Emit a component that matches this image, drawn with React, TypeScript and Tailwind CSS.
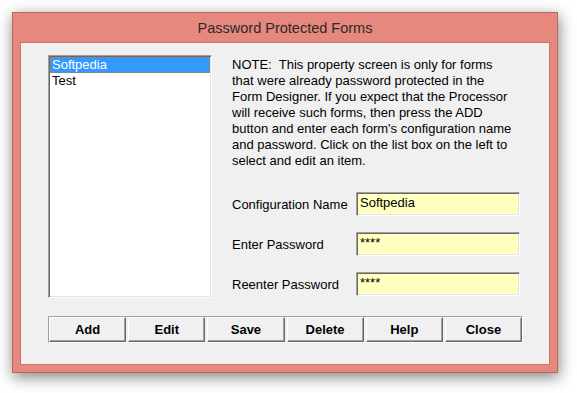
const NOTE_LINES = [
  "NOTE:  This property screen is only for forms",
  "that were already password protected in the",
  "Form Designer. If you expect that the Processor",
  "will receive such forms, then press the ADD",
  "button and enter each form's configuration name",
  "and password. Click on the list box on the left to",
  "select and edit an item.",
];

const FIELDS = [
  { label: "Configuration Name", value: "Softpedia" },
  { label: "Enter Password", value: "****" },
  { label: "Reenter Password", value: "****" },
];

const BUTTONS = ["Add", "Edit", "Save", "Delete", "Help", "Close"];

const sunken =
  "border border-t-[#a0a0a0] border-l-[#a0a0a0] border-r-white border-b-white shadow-[inset_1px_1px_0_#696969,inset_-1px_-1px_0_#e3e3e3]";

export default function App() {
  return (
    <div className="w-[577px] h-[393px] bg-white pt-[12px] pl-[12px] font-['Liberation_Sans',Arial,sans-serif] text-black">
      <div className="w-[546px] border border-[#b9685e] bg-[#e6887d] shadow-[1px_4px_14px_rgba(0,0,0,0.5)]">
        <div className="h-[29px] flex items-center justify-center text-[14.5px] text-[#2b2b2b] pt-[2px]">
          Password Protected Forms
        </div>

        <div className="mx-[7px] mb-[7px] h-[323px] border border-[#c9776d] bg-[#f0f0f0]">
          <div className="flex items-start pt-[12px] pl-[27px]">
            <div className={`w-[164px] h-[243px] bg-white p-[1px] ${sunken}`}>
              <div className="h-[16px] bg-[#3399ff] border border-dotted border-[#d0761e] text-white text-[13px] leading-[14px] pl-[1px]">
                Softpedia
              </div>
              <div className="h-[16px] text-[13px] leading-[16px] pl-[2px]">Test</div>
            </div>

            <div className="ml-[20px] w-[290px] pt-[2px]">
              <div className="text-[13px] leading-[16px] whitespace-pre">
                {NOTE_LINES.map((line) => (
                  <div key={line}>{line}</div>
                ))}
              </div>

              <div className="mt-[23px] flex flex-col gap-[16px]">
                {FIELDS.map((f) => (
                  <div key={f.label} className="flex items-center h-[24px]">
                    <span className="w-[124px] text-[13px] pt-[1px]">{f.label}</span>
                    <div
                      className={`w-[164px] h-[24px] bg-[#ffffc0] text-[13px] leading-[16px] pl-[3px] pt-[2px] ${sunken}`}
                    >
                      {f.value}
                    </div>
                  </div>
                ))}
              </div>
            </div>
          </div>

          <div className="mt-[18px] ml-[27px] w-[475px] h-[27px] flex gap-[2px] border border-t-[#a0a0a0] border-l-[#a0a0a0] border-r-white border-b-white">
            {BUTTONS.map((b) => (
              <div
                key={b}
                className="flex-1 flex items-center justify-center bg-[#f0f0f0] border border-t-white border-l-white border-r-[#696969] border-b-[#696969] shadow-[inset_-1px_-1px_0_#a0a0a0] text-[13px] font-bold"
              >
                {b}
              </div>
            ))}
          </div>
        </div>
      </div>
    </div>
  );
}
